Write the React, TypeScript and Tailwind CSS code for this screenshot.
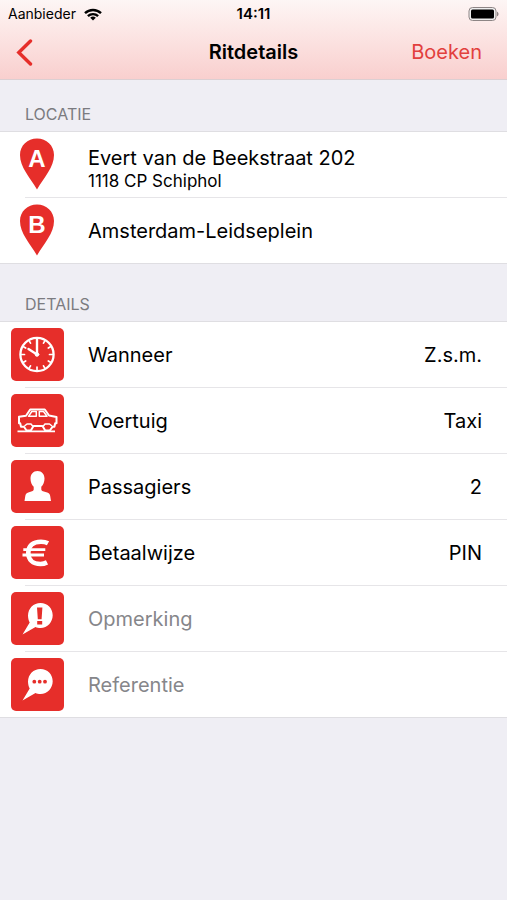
import type { ReactNode } from 'react'

interface Stop {
  label: string
  title: string
  subtitle?: string
}

interface Detail {
  name: string
  value?: string
  icon: ReactNode
}

const stops: Stop[] = [
  { label: 'A', title: 'Evert van de Beekstraat 202', subtitle: '1118 CP Schiphol' },
  { label: 'B', title: 'Amsterdam-Leidseplein' },
]

const details: Detail[] = [
  { name: 'Wanneer', value: 'Z.s.m.', icon: <ClockIcon /> },
  { name: 'Voertuig', value: 'Taxi', icon: <CarIcon /> },
  { name: 'Passagiers', value: '2', icon: <PersonIcon /> },
  { name: 'Betaalwijze', value: 'PIN', icon: <EuroIcon /> },
  { name: 'Opmerking', icon: <RemarkIcon /> },
  { name: 'Referentie', icon: <ReferenceIcon /> },
]

function ClockIcon() {
  return (
    <g fill="none" stroke="white" strokeLinecap="round">
      <circle cx="26" cy="26.5" r="16.6" strokeWidth="2.3" />
      <path
        strokeWidth="1.7"
        d="M42 26.5h-3.5M10 26.5h3.5M26 42.5v-3.5M39.9 18.5l-2.6 1.5M39.9 34.5l-2.6-1.5M12.1 34.5l2.6-1.5M12.1 18.5l2.6 1.5M34 40.4l-1.5-2.6M18 40.4l1.5-2.6M34 12.6l-1.5 2.6M18 12.6l1.5 2.6"
      />
      <path strokeWidth="2.4" d="M26 26.5V11.5M26 26.5l-8.5-5.5" />
      <circle cx="26" cy="26.5" r="1.8" fill="white" strokeWidth="1" />
    </g>
  )
}

function CarIcon() {
  return (
    <g fill="none" stroke="white" strokeWidth="2" strokeLinejoin="round">
      <path d="M13 32.800h-3l-.8-3.500H8v-6.500l7-1 4.200-6.300h14.600l4.200 6 7.500 1.500v6.300h-1.300l-.8 3.500H41.500l-2.700 3.700h-4.600l-2.700-4.500H22.500l-2.700 4.500h-4.300z" />
      <path d="M13.500 32l2.500-2h4l2 2.500M32 32.500l2-2.500h4.500l2.500 2" strokeWidth="1.500" />
      <path d="M17.500 22.300l3.300-4.800h4.500v4.800zM28.300 17.500h4.200l3.500 4.800h-7.700z" strokeWidth="1.500" />
      <path d="M6.500 37.300h37.500" strokeWidth="1.700" />
    </g>
  )
}

function PersonIcon() {
  return (
    <path
      fill="white"
      d="M26.500 11c4.300 0 7 3.200 7 7.500 0 3.500-1.200 6.400-3.200 8.200v2.600c0 1 .7 1.700 1.700 2l4.200 1.200c1.800.5 2.700 1.700 3 3.500l.8 5H13.500l.8-5c.3-1.800 1.200-3 3-3.500l3.700-1.200c1-.3 1.700-1 1.700-2v-2.600c-2-1.800-3.200-4.700-3.200-8.200 0-4.300 2.700-7.500 7-7.500z"
    />
  )
}

function EuroIcon() {
  return (
    <g fill="none" stroke="white">
      <path strokeWidth="4.600" d="M37 17.300C35 16.200 33 15.700 30 15.700 21.500 15.700 17.300 20 17.300 26.700S21.500 38 29.500 38c2.400 0 4.400-.5 6.500-1.600" />
      <path strokeWidth="2.800" d="M12.300 23.700h22M11.500 29h21.500" />
    </g>
  )
}

function SpeechBubble() {
  return (
    <path
      fill="white"
      d="M29.500 11C36.500 11 41.700 16.400 41.700 23.200S36.500 36 29.500 36c-2 0-3.600-.3-5-1L11.500 42.500 18.700 30.500C17.600 28.500 17 26 17 23.500 17 16.400 22.500 11 29.500 11z"
    />
  )
}

function RemarkIcon() {
  return (
    <>
      <SpeechBubble />
      <path fill="#e62e2a" d="M26 15.500h5.400l-.8 11.800h-3.800zM26.200 29h5v3.500h-5z" />
    </>
  )
}

function ReferenceIcon() {
  return (
    <>
      <SpeechBubble />
      <g fill="#e62e2a">
        <circle cx="23.300" cy="23.700" r="1.900" />
        <circle cx="28.700" cy="23.700" r="1.900" />
        <circle cx="34" cy="23.700" r="1.900" />
      </g>
    </>
  )
}

function Pin({ label }: { label: string }) {
  return (
    <svg viewBox="0 0 53 53" className="size-[53px] shrink-0" aria-hidden="true">
      <path
        fill="#e62e2a"
        d="M26 .5C35.500.5 43 7.500 43 17c0 12.500-9.500 21.500-17 34.500C18.500 38.500 9 29.500 9 17 9 7.500 16.500.5 26 .5z"
      />
      <text
        x="26"
        y="29"
        textAnchor="middle"
        fill="white"
        className="font-['Liberation_Sans',sans-serif] text-[24px] font-bold"
      >
        {label}
      </text>
    </svg>
  )
}

function StatusBar() {
  return (
    <div className="grid h-7 grid-cols-[1fr_auto_1fr] items-center px-2 text-sm">
      <div className="flex items-center gap-2">
        <span>Aanbieder</span>
        <svg viewBox="0 0 18 13" className="h-[13px] w-[18px]" aria-hidden="true">
          <g fill="none" stroke="black" strokeWidth="2.400">
            <path d="M1 5.200a11.500 11.500 0 0 1 16 0" />
            <path d="M3.900 8.200a7.300 7.300 0 0 1 10.200 0" />
          </g>
          <path d="M9 12.500L6.200 9.800a4 4 0 0 1 5.600 0z" />
        </svg>
      </div>
      <span className="text-[15px] font-semibold">14:11</span>
      <svg viewBox="0 0 33 14" className="h-[14px] w-[33px] justify-self-end" aria-hidden="true">
        <rect x="3" y=".5" width="27" height="13" rx="3.500" fill="#eee" stroke="#8d8585" />
        <rect x="5" y="2.500" width="23" height="9" rx="1.500" />
        <path fill="#8d8585" d="M31 4.700c2 .7 2 3.900 0 4.600z" />
      </svg>
    </div>
  )
}

function SectionTitle({ children, className }: { children: ReactNode; className: string }) {
  return (
    <h2 className={`flex items-end border-b border-[#dfdee2] px-[25px] pb-[7px] text-base leading-5 text-[#7b7b80] ${className}`}>
      {children}
    </h2>
  )
}

// hairline between rows is inset, the last one runs full width
function Divider({ last }: { last: boolean }) {
  return <div className={last ? 'h-px bg-[#dfdee2]' : 'ml-[25px] h-px bg-[#e6e5e8]'} />
}

export default function App() {
  return (
    <div className="min-h-screen bg-[#efeef4] font-[Inter,sans-serif] text-black">
      <header className="border-b border-[#dccfd2] bg-linear-to-b from-[#fdf6f5] to-[#f9cfce]">
        <StatusBar />
        <nav className="grid h-[51px] grid-cols-[1fr_auto_1fr] items-center pb-[3px] text-xl">
          <div className="flex pl-4">
            <button type="button" aria-label="Terug">
              <svg viewBox="0 0 17 27" className="h-[27px] w-[17px]" aria-hidden="true">
                <path d="M14.500 2L2.800 13.500 14.500 25" fill="none" stroke="#e62e2a" strokeWidth="3.400" strokeLinecap="round" />
              </svg>
            </button>
          </div>
          <h1 className="font-semibold">Ritdetails</h1>
          <div className="flex justify-end pr-[25px]">
            <button type="button" className="text-[#e2403d]">Boeken</button>
          </div>
        </nav>
      </header>

      <main>
        <section>
          <SectionTitle className="h-[52px]">LOCATIE</SectionTitle>
          <ul className="bg-white">
            {stops.map((stop, i) => (
              <li key={stop.label}>
                <button type="button" className="flex h-[65px] w-full items-center gap-6 pr-[25px] pl-[11px] text-left">
                  <Pin label={stop.label} />
                  <span className={stop.subtitle ? 'flex flex-col pt-2' : 'flex flex-col'}>
                    <span className="text-xl leading-6">{stop.title}</span>
                    {stop.subtitle && <span className="text-[17px] leading-[22px]">{stop.subtitle}</span>}
                  </span>
                </button>
                <Divider last={i === stops.length - 1} />
              </li>
            ))}
          </ul>
        </section>

        <section>
          <SectionTitle className="h-[58px]">DETAILS</SectionTitle>
          <ul className="bg-white">
            {details.map((detail, i) => (
              <li key={detail.name}>
                <button type="button" className="flex h-[65px] w-full items-center gap-6 pr-[25px] pl-[11px] text-left text-xl">
                  <svg viewBox="0 0 53 53" className="size-[53px] shrink-0 rounded-[5px] bg-[#e62e2a]" aria-hidden="true">
                    {detail.icon}
                  </svg>
                  <span className={detail.value ? 'flex-1' : 'flex-1 text-[#86868a]'}>{detail.name}</span>
                  {detail.value && <span>{detail.value}</span>}
                </button>
                <Divider last={i === details.length - 1} />
              </li>
            ))}
          </ul>
        </section>
      </main>
    </div>
  )
}
